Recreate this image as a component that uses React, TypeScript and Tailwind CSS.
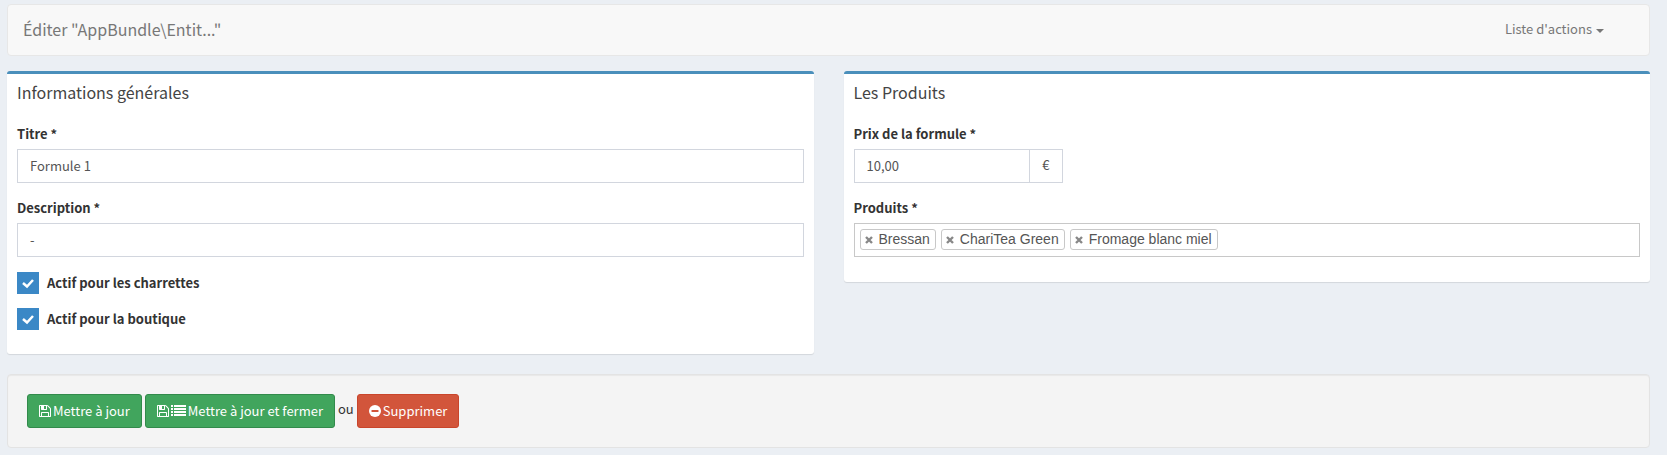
import { useState } from 'react';
import type { ReactNode } from 'react';

function FloppyIcon() {
  return (
    <svg viewBox="0 128 1536 1536" className="h-3 w-3 shrink-0" fill="currentColor" aria-hidden="true">
      <path d="M384 1536h768v-384h-768v384zm896 0h128v-896q0-14-10-38.5t-20-34.500l-281-281q-10-10-34-20t-39-10v416q0 40-28 68t-68 28h-576q-40 0-68-28t-28-68v-416h-128v1280h128v-416q0-40 28-68t68-28h832q40 0 68 28t28 68v416zm-384-928v-320q0-13-9.500-22.500t-22.500-9.500h-192q-13 0-22.500 9.500t-9.500 22.500v320q0 13 9.500 22.500t22.500 9.500h192q13 0 22.500-9.500t9.500-22.500zm640 32v928q0 40-28 68t-68 28h-1344q-40 0-68-28t-28-68v-1344q0-40 28-68t68-28h928q40 0 88 20t76 48l280 280q28 28 48 76t20 88z" />
    </svg>
  );
}

function ListIcon() {
  return (
    <svg viewBox="0 0 15 12" className="ml-0.5 h-3 w-[15px] shrink-0" fill="currentColor" aria-hidden="true">
      <path d="M0 0h2v2H0zM3 0h12v2H3zM0 3h2v2H0zM3 3h12v2H3zM0 6h2v2H0zM3 6h12v2H3zM0 9h2v2H0zM3 9h12v2H3z" />
    </svg>
  );
}

function MinusCircleIcon() {
  return (
    <svg viewBox="0 0 12 12" className="h-3 w-3 shrink-0" aria-hidden="true">
      <circle cx="6" cy="6" r="6" fill="currentColor" />
      <rect x="2.500" y="5" width="7" height="2" rx="0.500" fill="#d2553b" />
    </svg>
  );
}

function Box({ title, children }: { title: string; children: ReactNode }) {
  return (
    <section className="min-w-0 flex-1 rounded-[3px] border-t-3 border-[#4a8fbb] bg-white shadow-[0_1px_1px_rgba(0,0,0,0.1)]">
      <h2 className="px-[10px] pt-[7px] pb-[11px] text-[16px] leading-[22px] text-[#444]">{title}</h2>
      <div className="flex flex-col px-[10px] pt-[10px] pb-[10px]">{children}</div>
    </section>
  );
}

function Field({ id, label, children }: { id: string; label: string; children: ReactNode }) {
  return (
    <div className="mb-[15px]">
      <label htmlFor={id} className="mb-[5px] block leading-5 font-bold text-[#333]">{label} *</label>
      {children}
    </div>
  );
}

function TextInput({ id, initial }: { id: string; initial: string }) {
  return (
    <input
      id={id}
      type="text"
      defaultValue={initial}
      className="block h-[34px] w-full min-w-0 border border-[#d2d6de] bg-white px-3 pb-0.5 text-[#555] outline-none focus:border-[#3c8dbc]"
    />
  );
}

function CheckField({ label }: { label: string }) {
  return (
    <label className="mb-[14px] flex items-center gap-2 font-bold text-[#333]">
      <span className="grid h-[22px] w-[22px]">
        <input type="checkbox" defaultChecked className="peer col-start-1 row-start-1 h-[22px] w-[22px] appearance-none border border-[#d2d6de] checked:border-0 checked:bg-[#3b88c6]" />
        <svg
          viewBox="0 0 22 22"
          className="pointer-events-none invisible col-start-1 row-start-1 h-[22px] w-[22px] peer-checked:visible"
          aria-hidden="true"
        >
          <path d="M6 11l4 3.500 6-6.500" fill="none" stroke="#fff" strokeWidth="2.500" />
        </svg>
      </span>
      <span className="leading-5">{label}</span>
    </label>
  );
}

const BTN = 'flex h-[34px] items-center rounded-[3px] border px-[11px] text-white';
const GREEN = 'border-[#328a4b] bg-[#41a55d]';
const RED = 'border-[#c9452b] bg-[#d2553b]';

export default function App() {
  const [products, setProducts] = useState(['Bressan', 'ChariTea Green', 'Fromage blanc miel']);

  return (
    <div className="min-h-screen bg-[#ebeff4] pt-1 pr-[17px] pb-[6px] pl-[7px] font-['Noto_Sans_CJK_JP','Source_Sans_Pro',sans-serif] text-[13px] text-[#333]">
      {/* Title bar */}
      <nav className="flex h-[52px] items-center justify-between rounded-[4px] border border-[#e7e7e7] bg-[#f8f8f8] pr-[45px] pb-0.5 pl-[15px] text-[#777]">
        <span className="text-[16px] leading-5">Éditer "AppBundle\Entit..."</span>
        <button type="button" className="flex items-center gap-1 text-[13px]">
          Liste d'actions
          <svg viewBox="0 0 8 4" className="mt-1 h-1 w-2" fill="currentColor" aria-hidden="true">
            <path d="M0 0h8L4 4z" />
          </svg>
        </button>
      </nav>

      <form onSubmit={(e) => e.preventDefault()}>
        <div className="mt-[15px] flex items-start gap-[30px]">
          <Box title="Informations générales">
            <Field id="titre" label="Titre">
              <TextInput id="titre" initial="Formule 1" />
            </Field>
            <Field id="description" label="Description">
              <TextInput id="description" initial="-" />
            </Field>
            <CheckField label="Actif pour les charrettes" />
            <CheckField label="Actif pour la boutique" />
          </Box>

          <Box title="Les Produits">
            <Field id="prix" label="Prix de la formule">
              <div className="flex w-[209px]">
                <TextInput id="prix" initial="10,00" />
                <span className="flex h-[34px] items-center border border-l-0 border-[#d2d6de] px-3 pb-0.5 text-[#555]">€</span>
              </div>
            </Field>
            <Field id="produits" label="Produits">
              <div className="flex min-h-[34px] items-start gap-[5px] border border-[#c8c8c8] bg-white pt-[5px] pl-[5px] font-['Liberation_Sans',Arial,sans-serif] text-[14px] text-[#555]">
                {products.map((name) => (
                  <span key={name} className="flex h-[21px] items-center rounded-[3px] border border-[#c8c8c8] pr-[5px] pl-1 leading-[18px]">
                    <button
                      type="button"
                      aria-label={`Retirer ${name}`}
                      className="mr-[6px]"
                      onClick={() => setProducts(products.filter((p) => p !== name))}
                    >
                      <svg viewBox="0 0 8 8" className="h-2 w-2" aria-hidden="true">
                        <path d="M1 1l6 6M7 1L1 7" fill="none" stroke="#888" strokeWidth="2.400" />
                      </svg>
                    </button>
                    <span className="pb-0.5">{name}</span>
                  </span>
                ))}
                <input id="produits" type="text" className="h-[21px] min-w-0 flex-1 outline-none" />
              </div>
            </Field>
          </Box>
        </div>

        {/* Form actions */}
        <div className="mt-5 flex h-[74px] items-center gap-[3px] rounded-[4px] border border-[#e3e3e3] bg-[#f4f4f4] px-[19px] shadow-[inset_0_1px_1px_rgba(0,0,0,0.05)]">
          <button type="submit" className={`${BTN} ${GREEN}`}>
            <FloppyIcon />
            <span className="ml-0.5">Mettre à jour</span>
          </button>
          <button type="submit" className={`${BTN} ${GREEN}`}>
            <FloppyIcon />
            <ListIcon />
            <span className="ml-0.5">Mettre à jour et fermer</span>
          </button>
          <span className="pb-1">ou</span>
          <button type="button" className={`${BTN} ${RED}`}>
            <MinusCircleIcon />
            <span className="ml-0.5">Supprimer</span>
          </button>
        </div>
      </form>
    </div>
  );
}
